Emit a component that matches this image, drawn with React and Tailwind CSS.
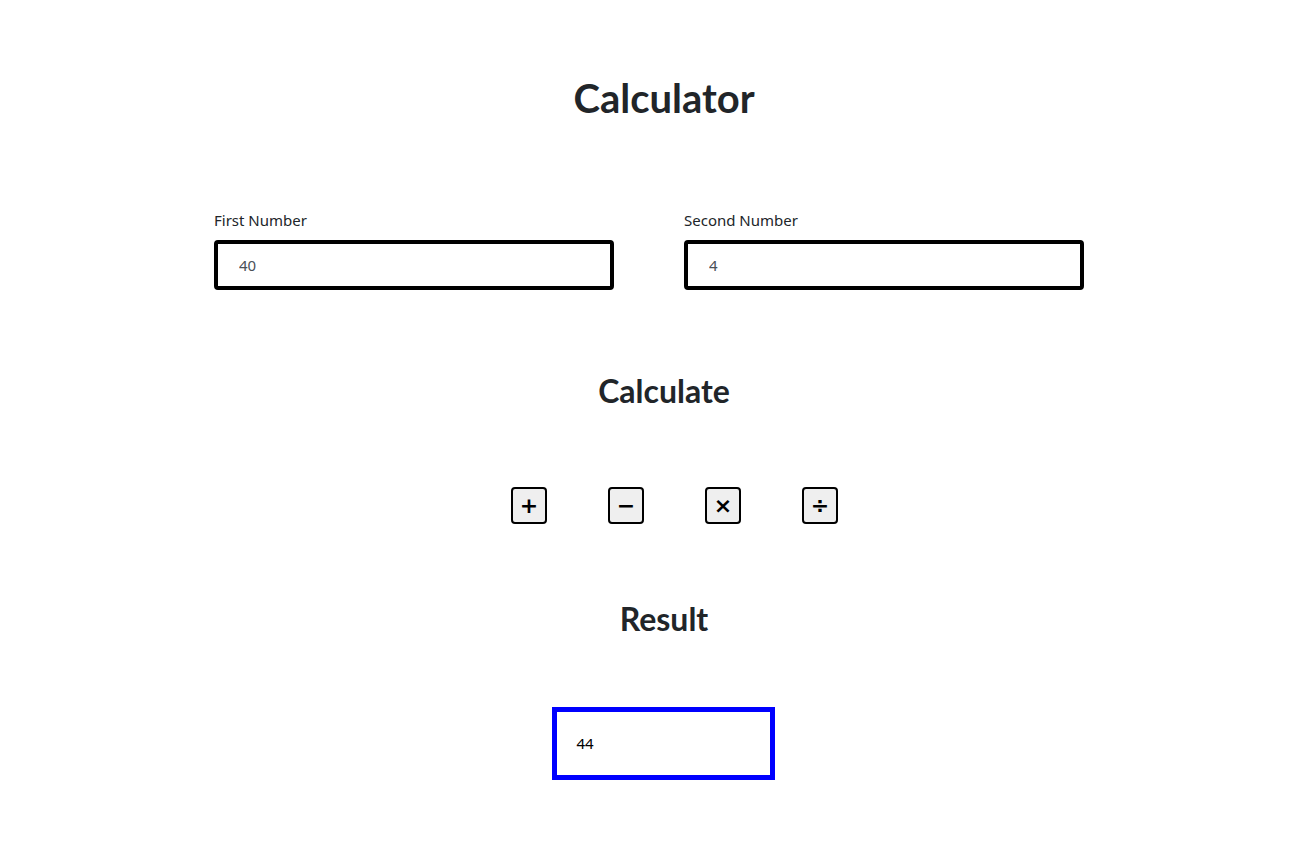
import { useState } from "react";

const ops = [
  { sym: "+", fn: (a, b) => a + b },
  { sym: "−", fn: (a, b) => a - b },
  { sym: "×", fn: (a, b) => a * b },
  { sym: "÷", fn: (a, b) => a / b },
];

const App = () => {
  const [first, setFirst] = useState("40");
  const [second, setSecond] = useState("4");
  const [result, setResult] = useState("44");

  const calc = (fn) => {
    const r = fn(Number(first), Number(second));
    setResult(String(r));
  };

  return (
    <div className="min-h-screen bg-white text-[#212529] font-['Noto_Sans',sans-serif]">
      <div className="ml-[33px] pt-[74px] text-center">
        <h1 className="text-[40px] leading-[48px] font-bold font-['Lato',sans-serif]">Calculator</h1>
      </div>

      {/* inputs */}
      <div className="mt-[87px] ml-[214px] flex gap-[70px]">
        <div className="w-[400px]">
          <label className="block text-[15px] leading-[22px]">First Number</label>
          <input
            value={first}
            onChange={(e) => setFirst(e.target.value)}
            className="mt-[9px] block w-full h-[50px] border-4 border-black rounded-[4px] pl-[21px] text-[15px] text-[#495057] outline-none"
          />
        </div>
        <div className="w-[400px]">
          <label className="block text-[15px] leading-[22px]">Second Number</label>
          <input
            value={second}
            onChange={(e) => setSecond(e.target.value)}
            className="mt-[9px] block w-full h-[50px] border-4 border-black rounded-[4px] pl-[21px] text-[15px] text-[#495057] outline-none"
          />
        </div>
      </div>

      <div className="ml-[33px] mt-[82px] text-center">
        <h2 className="text-[32px] leading-[38px] font-bold font-['Lato',sans-serif]">Calculate</h2>
      </div>

      <div className="mt-[77px] pl-[54px] flex justify-center gap-[61px]">
        {ops.map((op) => (
          <button
            key={op.sym}
            onClick={() => calc(op.fn)}
            className="w-[36px] h-[37px] flex items-center justify-center bg-[#efefef] border-2 border-black rounded-[4px] text-[22px] font-bold text-black font-['DejaVu_Sans',sans-serif]"
          >
            {op.sym}
          </button>
        ))}
      </div>

      <div className="ml-[33px] mt-[76px] text-center">
        <h2 className="text-[32px] leading-[38px] font-bold font-['Lato',sans-serif]">Result</h2>
      </div>

      <div className="ml-[31px] mt-[69px] flex justify-center">
        <div className="w-[223px] h-[73px] border-[5px] border-[#0000ff] flex items-center pl-[20px] text-[15px] text-black">
          {result}
        </div>
      </div>
    </div>
  );
};

export default App;
